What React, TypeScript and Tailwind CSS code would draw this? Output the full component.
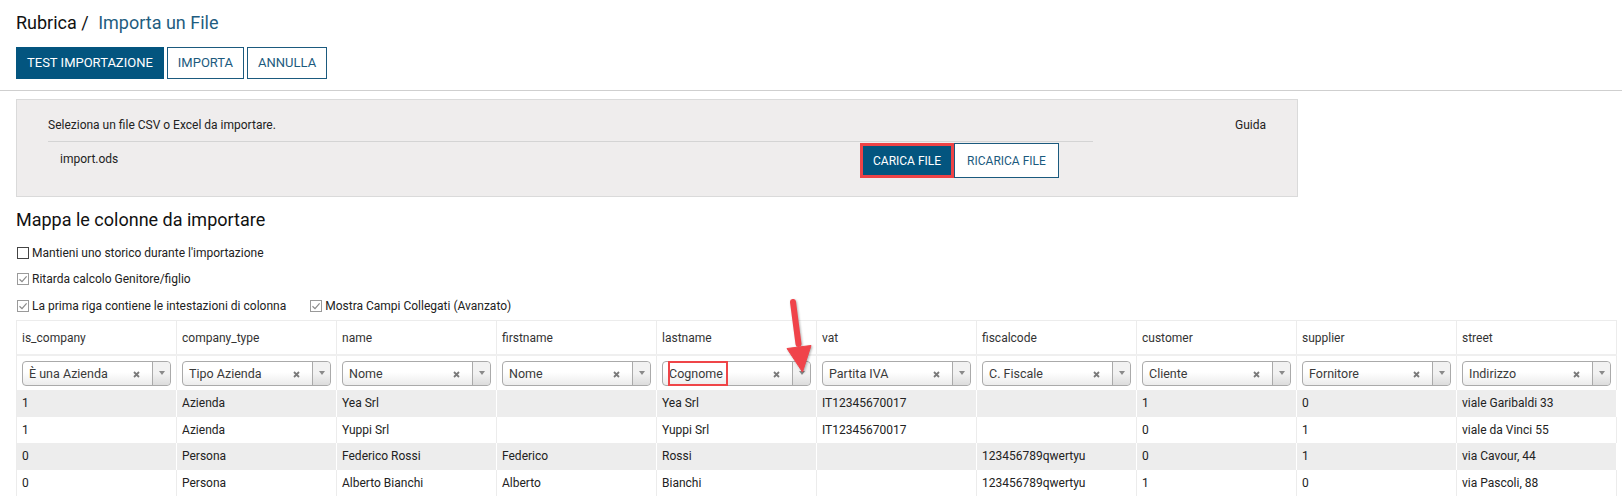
import React from "react";

const headers = ["is_company", "company_type", "name", "firstname", "lastname", "vat", "fiscalcode", "customer", "supplier", "street"];
const mapped = ["È una Azienda", "Tipo Azienda", "Nome", "Nome", "Cognome", "Partita IVA", "C. Fiscale", "Cliente", "Fornitore", "Indirizzo"];
const rows = [
  ["1", "Azienda", "Yea Srl", "", "Yea Srl", "IT12345670017", "", "1", "0", "viale Garibaldi 33"],
  ["1", "Azienda", "Yuppi Srl", "", "Yuppi Srl", "IT12345670017", "", "0", "1", "viale da Vinci 55"],
  ["0", "Persona", "Federico Rossi", "Federico", "Rossi", "", "123456789qwertyu", "0", "1", "via Cavour, 44"],
  ["0", "Persona", "Alberto Bianchi", "Alberto", "Bianchi", "", "123456789qwertyu", "1", "0", "via Pascoli, 88"],
];

function Check({ checked, dark }: { checked: boolean; dark?: boolean }) {
  return (
    <span className={`ml-px flex h-[12px] w-[12px] shrink-0 items-center justify-center border bg-white ${dark ? "border-[#444]" : "border-[#9a9a9a]"}`}>
      {checked && (
        <svg width="10" height="10" viewBox="0 0 10 10">
          <path d="M1.5 5.2 L4 7.6 L8.6 2.4" fill="none" stroke="#8a8a8a" strokeWidth="1.2" />
        </svg>
      )}
    </span>
  );
}

function Select2({ label, marked }: { label: string; marked?: boolean }) {
  return (
    <div className="relative h-[25px] w-[150px] rounded-[4px] border border-[#aaa] bg-[linear-gradient(to_bottom,#fff_45%,#ececec)]">
      <span className="absolute left-[6px] top-[3px] text-[12.5px] leading-[17px] text-[#3a3a3a]">{label}</span>
      {marked && <span className="absolute left-[5px] -top-px h-[25px] w-[60px] border-2 border-[#ef4548]" />}
      <svg className="absolute right-[30px] top-[9px]" width="7" height="7" viewBox="0 0 7 7">
        <path d="M1 1 L6 6 M6 1 L1 6" stroke="#7a7a7a" strokeWidth="1.8" />
      </svg>
      <div className="absolute bottom-0 right-0 top-0 flex w-[18px] items-center justify-center rounded-r-[4px] border-l border-[#aaa] bg-[linear-gradient(to_bottom,#f2f2f2_50%,#dcdcdc)]">
        <svg width="6" height="4" viewBox="0 0 6 4">
          <path d="M0 0 L6 0 L3 4 Z" fill="#8a8a8a" />
        </svg>
      </div>
    </div>
  );
}

export default function App() {
  return (
    <div className="relative min-h-[496px] w-[1622px] bg-white font-['Roboto',sans-serif] text-[12px] text-[#222]">
      <div className="px-4 pt-[11px]">
        <h1 className="text-[18px] leading-[24px] text-[#111]">
          Rubrica / <span className="ml-[5px] text-[#1f5d80]">Importa un File</span>
        </h1>
        <div className="mt-[12px] flex gap-[3px]">
          <button className="h-[32px] border border-[#03557f] bg-[#03557f] px-[10px] text-[13px] text-white">TEST IMPORTAZIONE</button>
          <button className="h-[32px] border border-[#1b5a7e] bg-white px-[10px] text-[13px] text-[#1b5a7e]">IMPORTA</button>
          <button className="h-[32px] border border-[#1b5a7e] bg-white px-[10px] text-[13px] text-[#1b5a7e]">ANNULLA</button>
        </div>
      </div>

      <div className="mt-[11px] border-t border-[#cfcfcf]" />

      <div className="ml-4 mt-[8px] h-[98px] w-[1282px] border border-[#dadada] bg-[#efeded] px-[31px]">
        <div className="flex h-[41px] justify-between pt-[17px] leading-[16px]">
          <span>Seleziona un file CSV o Excel da importare.</span>
          <span>Guida</span>
        </div>
        <div className="flex w-[1045px] border-t border-[#d4d4d4]">
          <div className="w-[812px] pl-[12px] pt-[9px] leading-[16px]">import.ods</div>
          <div className="mt-px flex">
            <button className="h-[35px] border-[3px] border-[#ee4346] bg-[#03557f] px-[10px] text-[12px] text-white">CARICA FILE</button>
            <button className="h-[35px] border border-[#1b5a7e] bg-white px-[12px] text-[12px] text-[#1b5a7e]">RICARICA FILE</button>
          </div>
        </div>
      </div>

      <div className="px-4">
        <h2 className="mt-[11px] text-[18px] leading-[24px] text-[#111]">Mappa le colonne da importare</h2>
        <div className="mt-[7.5px]">
          <label className="flex h-[26.5px] items-center gap-[3px]">
            <Check checked={false} dark />
            <span>Mantieni uno storico durante l'importazione</span>
          </label>
          <label className="flex h-[26.5px] items-center gap-[3px]">
            <Check checked />
            <span>Ritarda calcolo Genitore/figlio</span>
          </label>
          <div className="flex h-[26.5px] items-center gap-[23px]">
            <label className="flex items-center gap-[3px]">
              <Check checked />
              <span>La prima riga contiene le intestazioni di colonna</span>
            </label>
            <label className="flex items-center gap-[3px]">
              <Check checked />
              <span>Mostra Campi Collegati (Avanzato)</span>
            </label>
          </div>
        </div>

        <div className="mt-px w-[1601px] border-l border-t border-[#ececec]">
          <div className="grid h-[33px] grid-cols-[repeat(10,160px)]">
            {headers.map((h) => (
              <div key={h} className="flex items-center border-r border-[#ececec] pl-[5px] text-[#333]">{h}</div>
            ))}
          </div>
          <div className="grid h-[36px] grid-cols-[repeat(10,160px)] border-t-2 border-[#efefef]">
            {mapped.map((m, i) => (
              <div key={i} className="flex items-center border-r border-[#ececec] px-[5px]">
                <Select2 label={m} marked={i === 4} />
              </div>
            ))}
          </div>
          {rows.map((r, ri) => (
            <div key={ri} className={`grid h-[26.5px] grid-cols-[repeat(10,160px)] ${ri % 2 === 0 ? "bg-[#ededed]" : "bg-white"}`}>
              {r.map((c, ci) => (
                <div key={ci} className={`flex items-center border-r pl-[5px] ${ri % 2 === 0 ? "border-white" : "border-[#ececec]"}`}>{c}</div>
              ))}
            </div>
          ))}
        </div>
      </div>

      <svg className="absolute left-[780px] top-[290px] drop-shadow-[1px_1px_1px_rgba(0,0,0,0.3)]" width="40" height="90" viewBox="0 0 40 90">
        <path d="M13 12 L18.5 54" stroke="#f0434a" strokeWidth="6" strokeLinecap="round" />
        <path d="M7 58.5 L31 55.5 L22.5 82 Z" fill="#f0434a" strokeLinejoin="round" stroke="#f0434a" strokeWidth="1" />
      </svg>
    </div>
  );
}
